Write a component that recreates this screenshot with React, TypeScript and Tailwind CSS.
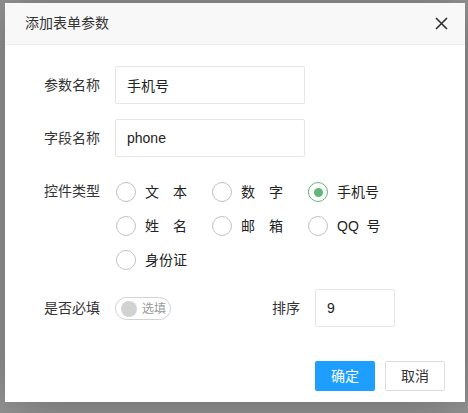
import React, { useState } from 'react';

const fontStack = { fontFamily: '"Liberation Sans", "Noto Sans CJK SC", sans-serif' };

type Option = { value: string; label: string };

const options: Option[] = [
    { value: 'text', label: '文　本' },
    { value: 'number', label: '数　字' },
    { value: 'phone', label: '手机号' },
    { value: 'name', label: '姓　名' },
    { value: 'email', label: '邮　箱' },
    { value: 'qq', label: 'QQ\u00a0\u00a0号' },
    { value: 'idcard', label: '身份证' },
];

const Label: React.FC<{ children: React.ReactNode }> = ({ children }) => (
    <label className="w-[110px] shrink-0 pr-[15px] py-[9px] text-right leading-5 text-[14px] text-[#333]">
        {children}
    </label>
);

const App: React.FC = () => {
    const [tipo, setTipo] = useState('phone');
    const [required, setRequired] = useState(false);

    return (
        <div className="w-[468px] h-[413px] bg-[#959595] pt-[3px] pl-[5px]" style={fontStack}>
            <div className="w-[460px] h-[399px] bg-white flex flex-col shadow-[1px_1px_50px_rgba(0,0,0,0.3)]">
                {/* cabecera */}
                <div className="h-[42px] shrink-0 bg-[#f8f8f8] border-b border-[#eee] flex items-center justify-between pl-5 pr-[17px]">
                    <span className="text-[14px] text-[#333]">添加表单参数</span>
                    <button type="button" className="w-[14px] h-[14px] flex items-center justify-center">
                        <svg width="13" height="13" viewBox="0 0 13 13" fill="none" stroke="#2f2f2f" strokeWidth="1.6">
                            <path d="M1 1L12 12M12 1L1 12" />
                        </svg>
                    </button>
                </div>

                {/* cuerpo */}
                <div className="flex-1 pt-[21px] flex flex-col">
                    <div className="flex mb-[15px]">
                        <Label>参数名称</Label>
                        <input
                            className="w-[190px] h-[38px] border border-[#e6e6e6] rounded-[2px] px-[11px] text-[14px] text-[#222] outline-none"
                            defaultValue="手机号"
                        />
                    </div>

                    <div className="flex mb-[15px]">
                        <Label>字段名称</Label>
                        <input
                            className="w-[190px] h-[38px] border border-[#e6e6e6] rounded-[2px] px-[11px] text-[14px] text-[#222] outline-none"
                            defaultValue="phone"
                        />
                    </div>

                    <div className="flex mb-[15px]">
                        <Label>控件类型</Label>
                        <div className="grid grid-cols-[96px_96px_96px]">
                            {options.map(opt => {
                                const checked = tipo === opt.value;
                                return (
                                    <div
                                        key={opt.value}
                                        onClick={() => setTipo(opt.value)}
                                        className="mt-[6px] h-[28px] flex items-center cursor-pointer"
                                    >
                                        <span
                                            className={`w-[20px] h-[20px] ml-[1px] rounded-full border-[1.5px] flex items-center justify-center ${checked ? 'border-[#5fb878]' : 'border-[#c2c2c2]'}`}
                                        >
                                            {checked && <span className="w-[9px] h-[9px] rounded-full bg-[#5fb878]" />}
                                        </span>
                                        <span className="ml-[9px] text-[14px] text-[#222] whitespace-pre">{opt.label}</span>
                                    </div>
                                );
                            })}
                        </div>
                    </div>

                    <div className="flex items-start">
                        <Label>是否必填</Label>
                        <div className="w-[90px] shrink-0 pt-[8px]">
                            <button
                                type="button"
                                onClick={() => setRequired(!required)}
                                className="w-[56px] h-[23px] rounded-full border border-[#d2d2d2] flex items-center pl-[5px] gap-[5px]"
                            >
                                <span className="w-[16px] h-[16px] rounded-full bg-[#d2d2d2]" />
                                <span className="text-[12px] text-[#999]">选填</span>
                            </button>
                        </div>
                        <Label>排序</Label>
                        <input
                            className="w-[80px] h-[38px] border border-[#e6e6e6] rounded-[2px] px-[11px] text-[14px] text-[#222] outline-none"
                            defaultValue="9"
                        />
                    </div>
                </div>

                {/* botones */}
                <div className="flex justify-end gap-[10px] pr-[20px] pb-[11px]">
                    <button type="button" className="w-[60px] h-[30px] rounded-[2px] bg-[#1e9fff] text-white text-[14px]">
                        确定
                    </button>
                    <button type="button" className="w-[60px] h-[30px] rounded-[2px] bg-white border border-[#dedede] text-[#333] text-[14px]">
                        取消
                    </button>
                </div>
            </div>
        </div>
    );
};

export default App;
